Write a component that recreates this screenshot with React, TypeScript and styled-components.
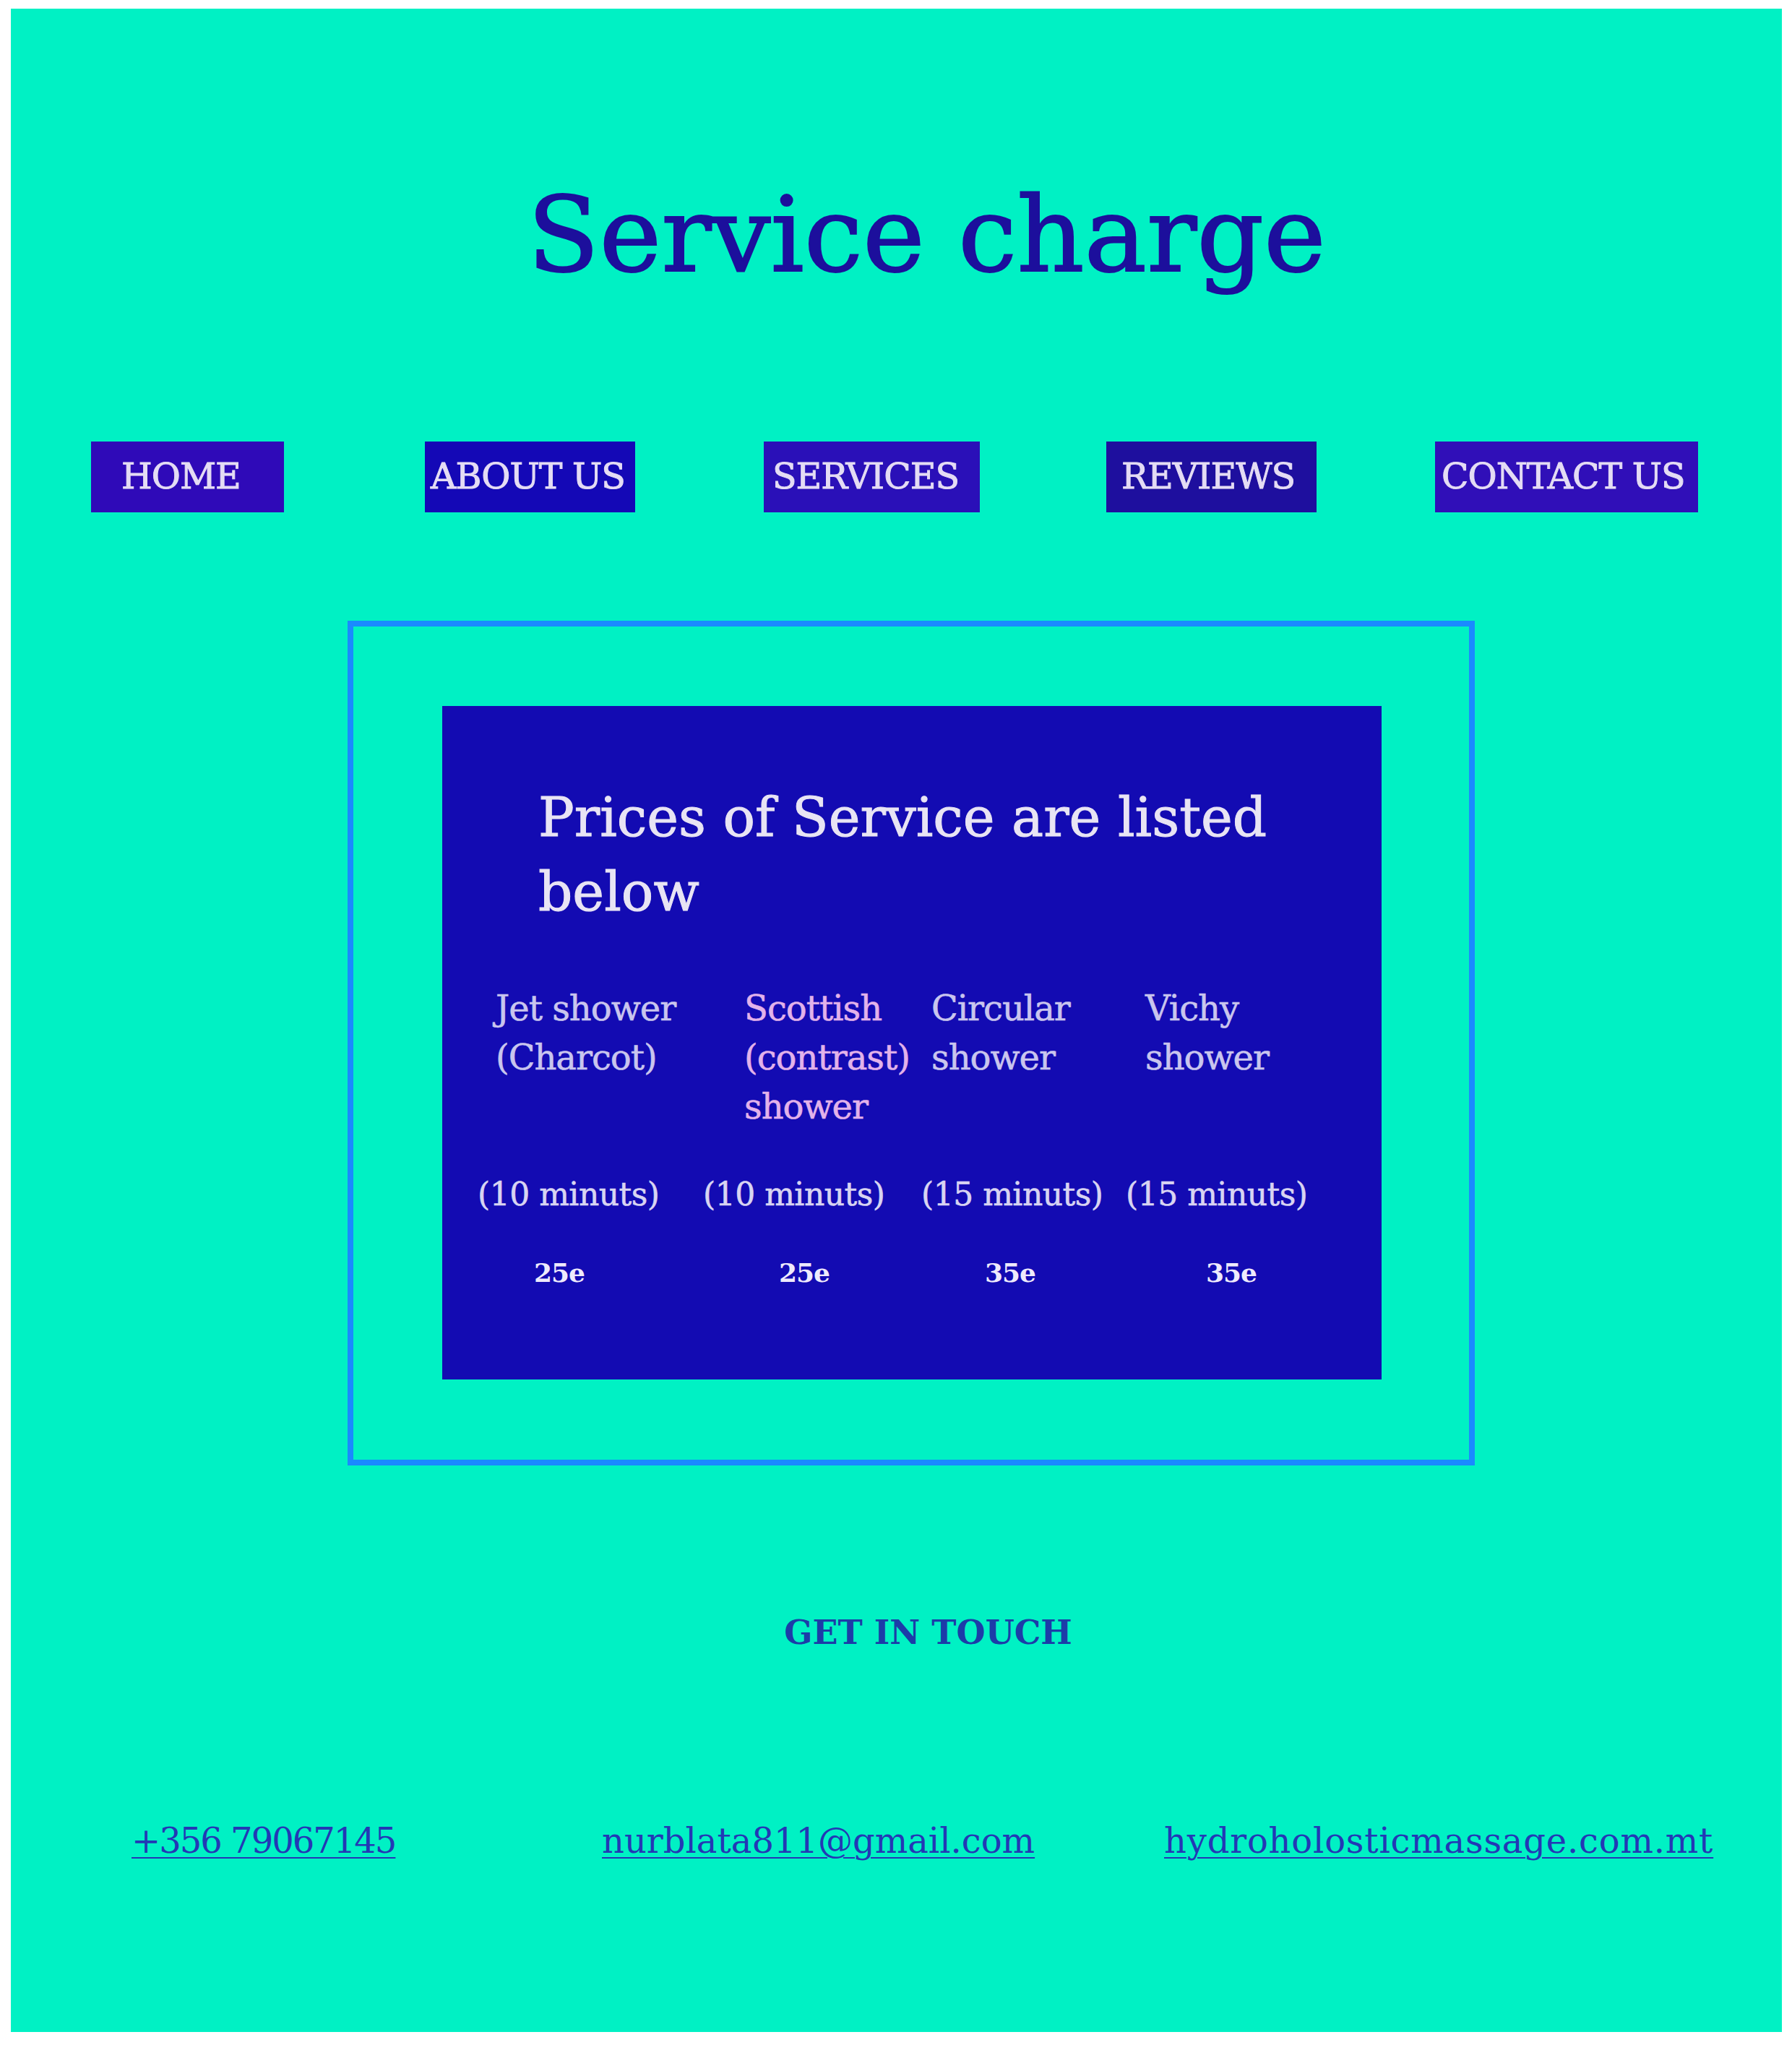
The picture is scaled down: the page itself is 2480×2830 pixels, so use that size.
import React from "react";
import styled, { createGlobalStyle } from "styled-components";

const Global = createGlobalStyle`
  html, body { margin: 0; padding: 0; background: #ffffff; }
  body { font-family: "DejaVu Serif", "Liberation Serif", serif; }
  * { box-sizing: border-box; }
`;

const Page = styled.div`
  margin: 12px 14px 0 15px;
  width: 2451px;
  height: 2800px;
  background: #00f1c4;
  display: flex;
  flex-direction: column;
  font-family: "DejaVu Serif", "Liberation Serif", serif;
`;

const Title = styled.h1`
  margin: 241px 0 0 0;
  font-size: 145px;
  line-height: 144px;
  font-weight: 400;
  color: #1c0f9c;
  text-align: center;
  padding-left: 84px;
  -webkit-text-stroke: 2px #1c0f9c;
`;

const Nav = styled.nav`
  margin-top: 214px;
  display: grid;
  grid-template-columns: 462px 469px 474px 455px auto;
  align-items: center;
  padding-left: 111px;
`;

const NavButton = styled.a<{ $w: number; $pl: number; $bg: string }>`
  display: block;
  width: ${(p) => p.$w}px;
  height: 98px;
  padding-left: ${(p) => p.$pl}px;
  background: ${(p) => p.$bg};
  color: #e4dcf4;
  font-size: 49px;
  line-height: 98px;
  white-space: nowrap;
  text-decoration: none;
  letter-spacing: -1px;
  -webkit-text-stroke: 1px #e4dcf4;
`;

const Frame = styled.section`
  margin: 150px 0 0 466px;
  width: 1560px;
  border: 8px solid #1a8aff;
  padding: 110px 121px 111px 123px;
`;

const Card = styled.div`
  background: #130bb2;
  height: 932px;
  padding: 103px 0 0 49px;
  display: flex;
  flex-direction: column;
`;

const CardHeading = styled.h2`
  margin: 0 0 0 84px;
  max-width: 1100px;
  font-size: 74px;
  line-height: 103px;
  font-weight: 400;
  color: #e8e4f4;
  -webkit-text-stroke: 1px #e8e4f4;
`;

const Row = styled.div<{ $cols: string; $indent: number; $top: number }>`
  display: grid;
  grid-template-columns: ${(p) => p.$cols};
  margin: ${(p) => p.$top}px 0 0 ${(p) => p.$indent}px;
`;

const Name = styled.div<{ $pink?: boolean }>`
  font-size: 48px;
  line-height: 68px;
  color: ${(p) => (p.$pink ? "#e2b2ea" : "#c9c5ee")};
  white-space: nowrap;
  letter-spacing: -1px;
  -webkit-text-stroke: 0.6px ${(p) => (p.$pink ? "#e2b2ea" : "#c9c5ee")};
`;

const Minutes = styled.div`
  font-size: 44px;
  line-height: 60px;
  color: #d8d4f2;
  white-space: nowrap;
  letter-spacing: -0.5px;
  -webkit-text-stroke: 0.6px #d8d4f2;
`;

const Price = styled.div`
  font-size: 36px;
  line-height: 50px;
  font-weight: 700;
  color: #eeeafc;
  white-space: nowrap;
  letter-spacing: -1px;
`;

const Touch = styled.h3`
  margin: 201px 0 0 0;
  padding-left: 88px;
  text-align: center;
  font-size: 46px;
  line-height: 60px;
  font-weight: 700;
  color: #1c3ca8;
`;

const Contacts = styled.div`
  margin: 228px 0 0 167px;
  display: grid;
  grid-template-columns: 651px 778px auto;
`;

const ContactLink = styled.a<{ $ls: number }>`
  font-size: 48px;
  line-height: 60px;
  color: #2338b5;
  text-decoration: underline;
  text-decoration-thickness: 2px;
  text-underline-offset: 6px;
  white-space: nowrap;
  letter-spacing: ${(p) => p.$ls}px;
`;

const navItems = [
  { label: "HOME", w: 267, pl: 42, bg: "#2f0ab8" },
  { label: "ABOUT US", w: 291, pl: 8, bg: "#1408b6" },
  { label: "SERVICES", w: 299, pl: 12, bg: "#2a10b8" },
  { label: "REVIEWS", w: 291, pl: 21, bg: "#1e0f9e" },
  { label: "CONTACT US", w: 364, pl: 9, bg: "#300fb8" },
];

const services = [
  { lines: ["Jet shower", "(Charcot)"], pink: false, minutes: "(10 minuts)", price: "25e" },
  { lines: ["Scottish", "(contrast)", "shower"], pink: true, minutes: "(10 minuts)", price: "25e" },
  { lines: ["Circular", "shower"], pink: false, minutes: "(15 minuts)", price: "35e" },
  { lines: ["Vichy", "shower"], pink: false, minutes: "(15 minuts)", price: "35e" },
];

const contacts = [
  { text: "+356 79067145", ls: -2 },
  { text: "nurblata811@gmail.com", ls: 0 },
  { text: "hydroholosticmassage.com.mt", ls: 0.8 },
];

export default function App() {
  return (
    <>
      <Global />
      <Page>
        <Title>Service charge</Title>
        <Nav>
          {navItems.map((n) => (
            <NavButton key={n.label} href="#" $w={n.w} $pl={n.pl} $bg={n.bg}>
              {n.label}
            </NavButton>
          ))}
        </Nav>
        <Frame>
          <Card>
            <CardHeading>Prices of Service are listed below</CardHeading>
            <Row $cols="344px 259px 296px auto" $indent={25} $top={75}>
              {services.map((s) => (
                <Name key={s.lines.join(" ")} $pink={s.pink}>
                  {s.lines.map((l, i) => (
                    <React.Fragment key={i}>
                      {l}
                      {i < s.lines.length - 1 && <br />}
                    </React.Fragment>
                  ))}
                </Name>
              ))}
            </Row>
            <Row $cols="312px 302px 283px auto" $indent={0} $top={58}>
              {services.map((s, i) => (
                <Minutes key={i}>{s.minutes}</Minutes>
              ))}
            </Row>
            <Row $cols="339px 285px 306px auto" $indent={78} $top={53}>
              {services.map((s, i) => (
                <Price key={i}>{s.price}</Price>
              ))}
            </Row>
          </Card>
        </Frame>
        <Touch>GET IN TOUCH</Touch>
        <Contacts>
          {contacts.map((c) => (
            <ContactLink key={c.text} href="#" $ls={c.ls}>
              {c.text}
            </ContactLink>
          ))}
        </Contacts>
      </Page>
    </>
  );
}
